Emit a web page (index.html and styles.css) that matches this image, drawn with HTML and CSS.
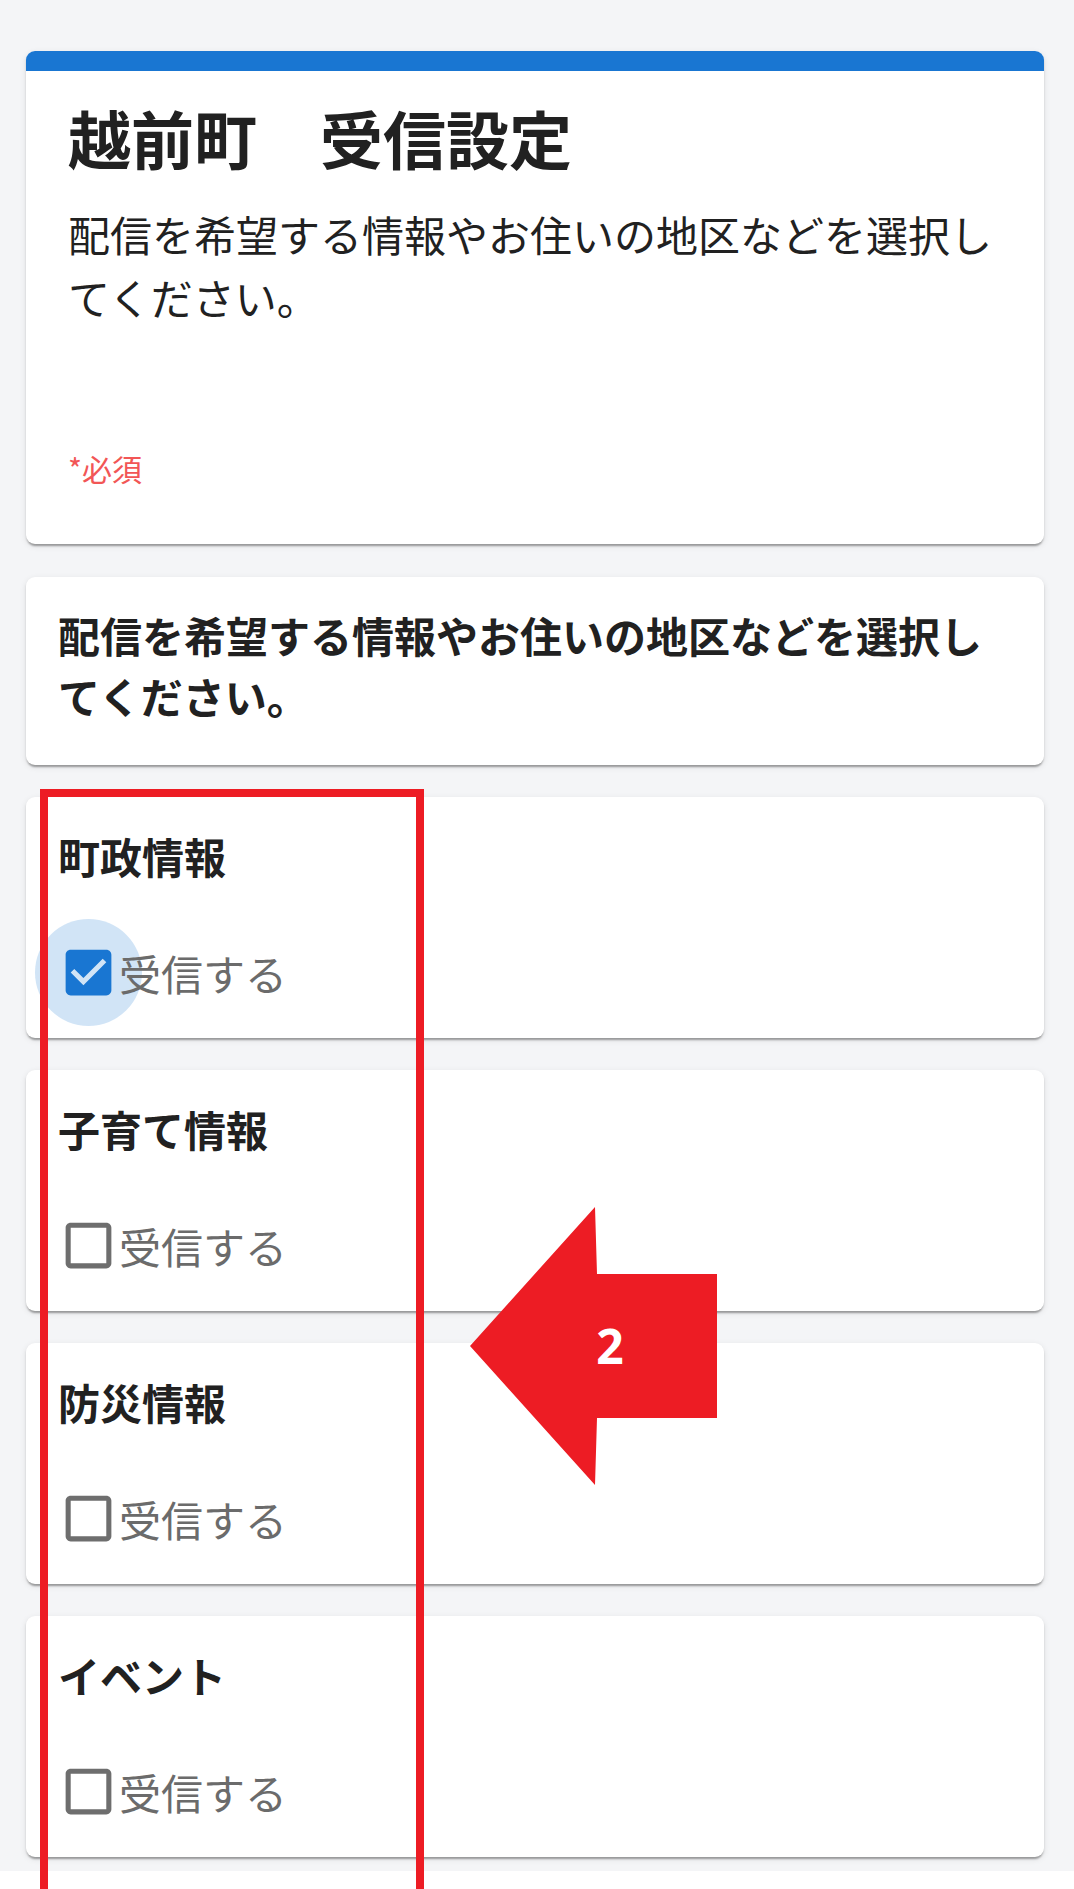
FILE: index.html
```html
<!DOCTYPE html>
<html lang="ja">
<head>
<meta charset="utf-8">
<title>越前町　受信設定</title>
<link rel="stylesheet" href="styles.css">
</head>
<body>
<div class="page">
  <section class="card card-head">
    <div class="head-bar"></div>
    <div class="head-body">
      <h1 class="title">越前町　受信設定</h1>
      <p class="desc">配信を希望する情報やお住いの地区などを選択してください。</p>
      <p class="required">*必須</p>
    </div>
  </section>

  <section class="card card-note">
    <p class="note">配信を希望する情報やお住いの地区などを選択してください。</p>
  </section>

  <section class="card card-option">
    <h2 class="opt-title">町政情報</h2>
    <label class="opt-row">
      <span class="cb cb-focus">
        <svg class="cb-icon checked" viewBox="0 0 24 24"><path d="M19 3H5c-1.11 0-2 .9-2 2v14c0 1.1.89 2 2 2h14c1.11 0 2-.9 2-2V5c0-1.1-.89-2-2-2zm-9 14l-5-5 1.41-1.41L10 14.170l7.59-7.59L19 8l-9 9z"/></svg>
        <span class="ripple"></span>
      </span>
      <span class="opt-label">受信する</span>
    </label>
  </section>

  <section class="card card-option">
    <h2 class="opt-title">子育て情報</h2>
    <label class="opt-row">
      <span class="cb">
        <svg class="cb-icon" viewBox="0 0 24 24"><path d="M19 5v14H5V5h14m0-2H5c-1.1 0-2 .9-2 2v14c0 1.1.9 2 2 2h14c1.1 0 2-.9 2-2V5c0-1.1-.9-2-2-2z"/></svg>
      </span>
      <span class="opt-label">受信する</span>
    </label>
  </section>

  <section class="card card-option">
    <h2 class="opt-title">防災情報</h2>
    <label class="opt-row">
      <span class="cb">
        <svg class="cb-icon" viewBox="0 0 24 24"><path d="M19 5v14H5V5h14m0-2H5c-1.1 0-2 .9-2 2v14c0 1.1.9 2 2 2h14c1.1 0 2-.9 2-2V5c0-1.1-.9-2-2-2z"/></svg>
      </span>
      <span class="opt-label">受信する</span>
    </label>
  </section>

  <section class="card card-option">
    <h2 class="opt-title">イベント</h2>
    <label class="opt-row">
      <span class="cb">
        <svg class="cb-icon" viewBox="0 0 24 24"><path d="M19 5v14H5V5h14m0-2H5c-1.1 0-2 .9-2 2v14c0 1.1.9 2 2 2h14c1.1 0 2-.9 2-2V5c0-1.1-.9-2-2-2z"/></svg>
      </span>
      <span class="opt-label">受信する</span>
    </label>
  </section>
</div>

<div class="annot-rect"></div>
<div class="annot-arrow">
  <svg class="arrow-svg" viewBox="0 0 248 279" width="248" height="279">
    <polygon points="0,139 125,0 127,67 247,67 247,211 127,211 125,278" fill="#ed1c24"/>
  </svg>
  <span class="arrow-num">2</span>
</div>
</body>
</html>
```

FILE: styles.css
```css
html, body {
  margin: 0;
  padding: 0;
}
html {
  overflow: hidden;
}
body {
  background: #ffffff;
  font-family: "Noto Sans CJK JP", "Noto Sans", sans-serif;
  color: #212121;
  position: relative;
  width: 1074px;
  height: 1889px;
  overflow: hidden;
}
.page {
  background: #f4f5f7;
  padding: 51px 30px 14px 26px;
  display: flex;
  flex-direction: column;
  gap: 32.5px;
}
.card {
  background: #ffffff;
  border-radius: 9px;
  box-shadow: 0 4px 2px -2px rgba(0,0,0,0.22), 0 2px 2px 0 rgba(0,0,0,0.14), 0 2px 6px 0 rgba(0,0,0,0.10);
  overflow: hidden;
}
.head-bar {
  height: 20px;
  background: #1976d2;
}
.head-body {
  padding: 27px 42px 53px 42px;
}
.title {
  margin: 0;
  font-size: 63px;
  line-height: 77px;
  font-weight: 700;
  color: #212121;
}
.desc {
  margin: 27px 0 0 0;
  font-size: 42px;
  line-height: 63px;
  font-weight: 400;
  color: #212121;
}
.required {
  margin: 118px 0 0 0;
  font-size: 30px;
  line-height: 45px;
  color: #f25656;
}
.card-note {
  padding: 27px 32px 39px 32px;
}
.note {
  margin: 0;
  font-size: 42px;
  line-height: 61px;
  font-weight: 700;
  color: #212121;
}
.card-option {
  padding: 29px 32px 32px 32px;
  height: 240.5px;
  box-sizing: border-box;
}
.opt-title {
  margin: 0;
  font-size: 42px;
  line-height: 59px;
  font-weight: 700;
  color: #212121;
}
.opt-row {
  margin-top: 56.5px;
  display: flex;
  align-items: center;
  height: 61px;
}
.cb {
  position: relative;
  width: 61px;
  height: 61px;
  flex: none;
}
.cb-icon {
  display: block;
  width: 61px;
  height: 61px;
  fill: #6e6e6e;
}
.cb-icon.checked {
  fill: #1976d2;
}
.ripple {
  position: absolute;
  left: 50%;
  top: 50%;
  width: 107px;
  height: 107px;
  margin-left: -53.5px;
  margin-top: -53.5px;
  border-radius: 50%;
  background: rgba(25,118,210,0.2);
}
.opt-label {
  position: relative;
  font-size: 42px;
  line-height: 61px;
  color: #6b6b6b;
}
.annot-rect {
  position: absolute;
  left: 40px;
  top: 789px;
  width: 368px;
  height: 1092px;
  border: 8px solid #ed1c24;
  border-bottom: none;
}
.annot-arrow {
  position: absolute;
  left: 470px;
  top: 1207px;
  width: 248px;
  height: 279px;
}
.arrow-svg {
  display: block;
}
.arrow-num {
  position: absolute;
  left: 100px;
  top: 109px;
  width: 80px;
  text-align: center;
  font-family: "Open Sans", "DejaVu Sans", sans-serif;
  font-weight: 700;
  font-size: 48px;
  line-height: 60px;
  color: #ffffff;
}
```
